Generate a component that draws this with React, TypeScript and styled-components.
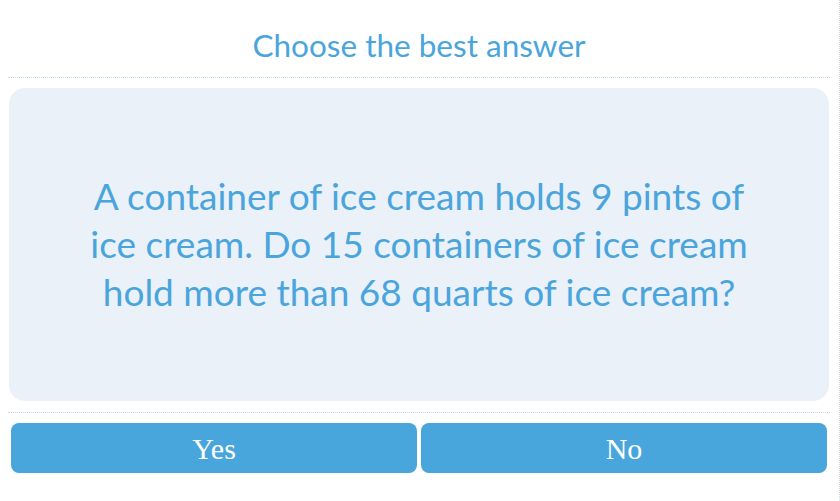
import React from "react";
import styled, { createGlobalStyle } from "styled-components";

const Global = createGlobalStyle`
  html, body { margin: 0; padding: 0; background: #ffffff; }
  #root { width: 840px; height: 501px; }
`;

const Page = styled.div`
  box-sizing: border-box;
  width: 840px;
  height: 501px;
  border-right: 1px dotted #cfdcea;
  padding: 0 9px 0 8px;
  display: flex;
  flex-direction: column;
`;

const Header = styled.div`
  box-sizing: border-box;
  height: 78px;
  border-bottom: 1px dotted #c4d8ec;
  display: flex;
  align-items: center;
  justify-content: center;
  padding-top: 12px;
  font-family: Lato, "Open Sans", sans-serif;
  font-size: 31.5px;
  color: #4aa5dd;
`;

const Card = styled.div`
  box-sizing: border-box;
  margin: 10px 1px 0 1px;
  height: 313px;
  background: #eaf1f9;
  border-radius: 16px;
  display: flex;
  align-items: center;
  justify-content: center;
  padding: 0 62px 2px;
  text-align: center;
  font-family: Lato, "Open Sans", sans-serif;
  font-size: 37px;
  line-height: 48px;
  color: #4aa5dd;
`;

const Divider = styled.div`
  margin-top: 11px;
  border-top: 1px dotted #c4d8ec;
`;

const Buttons = styled.div`
  margin-top: 10px;
  padding: 0 3px;
  display: grid;
  grid-template-columns: 1fr 1fr;
  gap: 4px;
`;

const Answer = styled.button`
  height: 50px;
  border: none;
  border-radius: 8px;
  background: #49a6dc;
  color: #ffffff;
  font-family: "Liberation Serif", "Times New Roman", serif;
  font-size: 30px;
  padding: 2px 0 0;
  cursor: pointer;
`;

export default function App() {
  return (
    <>
      <Global />
      <Page>
        <Header>Choose the best answer</Header>
        <Card>
          A container of ice cream holds 9 pints of ice cream. Do 15 containers of ice cream hold more than 68 quarts of ice cream?
        </Card>
        <Divider />
        <Buttons>
          <Answer>Yes</Answer>
          <Answer>No</Answer>
        </Buttons>
      </Page>
    </>
  );
}
